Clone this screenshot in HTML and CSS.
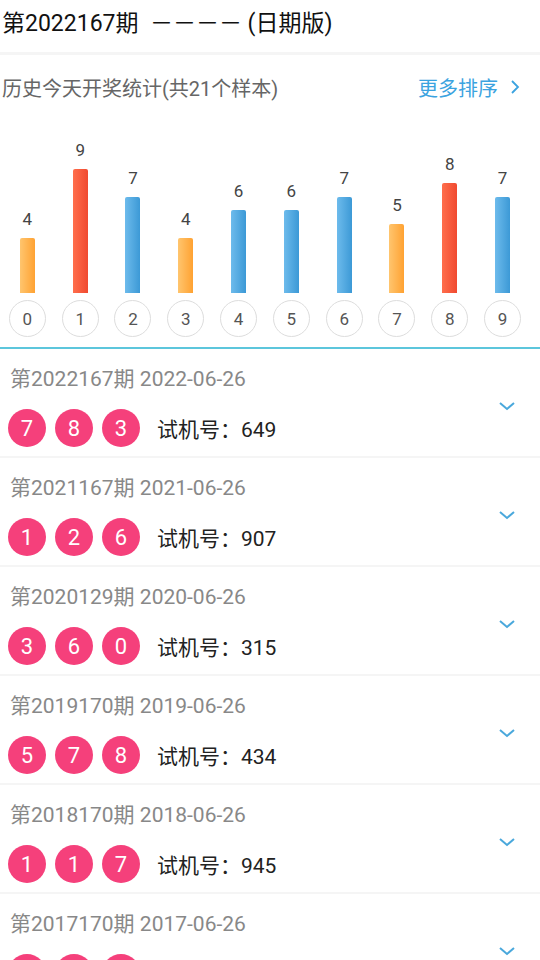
FILE: index.html
```html
<!DOCTYPE html>
<html lang="zh-CN">
<head>
	<meta charset="UTF-8">
	<title>开奖统计</title>
	<link rel="stylesheet" href="styles.css">
</head>
<body>
	<div class="page">
		<div class="top-title">第2022167期&nbsp; －－－－ (日期版)</div>
		<div class="divider"></div>

		<div class="stat-head">
			<span class="stat-title">历史今天开奖统计(共21个样本)</span>
			<a class="more-link">更多排序
				<svg width="10" height="16" viewBox="0 0 10 16"><polyline points="2,2 8,8 2,14" fill="none" stroke="#3ba3e0" stroke-width="1.8"/></svg>
			</a>
		</div>

		<div class="chart">
			<div class="col"><span class="num">4</span><div class="bar orange" style="height:55px"></div><span class="digit">0</span></div>
			<div class="col"><span class="num">9</span><div class="bar red" style="height:124px"></div><span class="digit">1</span></div>
			<div class="col"><span class="num">7</span><div class="bar blue" style="height:96px"></div><span class="digit">2</span></div>
			<div class="col"><span class="num">4</span><div class="bar orange" style="height:55px"></div><span class="digit">3</span></div>
			<div class="col"><span class="num">6</span><div class="bar blue" style="height:83px"></div><span class="digit">4</span></div>
			<div class="col"><span class="num">6</span><div class="bar blue" style="height:83px"></div><span class="digit">5</span></div>
			<div class="col"><span class="num">7</span><div class="bar blue" style="height:96px"></div><span class="digit">6</span></div>
			<div class="col"><span class="num">5</span><div class="bar orange" style="height:69px"></div><span class="digit">7</span></div>
			<div class="col"><span class="num">8</span><div class="bar red" style="height:110px"></div><span class="digit">8</span></div>
			<div class="col"><span class="num">7</span><div class="bar blue" style="height:96px"></div><span class="digit">9</span></div>
		</div>
		<div class="chart-line"></div>

		<ul class="draw-list">
			<li class="draw-item">
				<div class="draw-date">第2022167期 2022-06-26</div>
				<div class="draw-row">
					<span class="ball">7</span><span class="ball">8</span><span class="ball">3</span>
					<span class="test-no">试机号：649</span>
				</div>
				<svg class="arrow" width="18" height="10" viewBox="0 0 18 10"><polyline points="2,2 9,8 16,2" fill="none" stroke="#4aa8dc" stroke-width="2"/></svg>
			</li>
			<li class="draw-item">
				<div class="draw-date">第2021167期 2021-06-26</div>
				<div class="draw-row">
					<span class="ball">1</span><span class="ball">2</span><span class="ball">6</span>
					<span class="test-no">试机号：907</span>
				</div>
				<svg class="arrow" width="18" height="10" viewBox="0 0 18 10"><polyline points="2,2 9,8 16,2" fill="none" stroke="#4aa8dc" stroke-width="2"/></svg>
			</li>
			<li class="draw-item">
				<div class="draw-date">第2020129期 2020-06-26</div>
				<div class="draw-row">
					<span class="ball">3</span><span class="ball">6</span><span class="ball">0</span>
					<span class="test-no">试机号：315</span>
				</div>
				<svg class="arrow" width="18" height="10" viewBox="0 0 18 10"><polyline points="2,2 9,8 16,2" fill="none" stroke="#4aa8dc" stroke-width="2"/></svg>
			</li>
			<li class="draw-item">
				<div class="draw-date">第2019170期 2019-06-26</div>
				<div class="draw-row">
					<span class="ball">5</span><span class="ball">7</span><span class="ball">8</span>
					<span class="test-no">试机号：434</span>
				</div>
				<svg class="arrow" width="18" height="10" viewBox="0 0 18 10"><polyline points="2,2 9,8 16,2" fill="none" stroke="#4aa8dc" stroke-width="2"/></svg>
			</li>
			<li class="draw-item">
				<div class="draw-date">第2018170期 2018-06-26</div>
				<div class="draw-row">
					<span class="ball">1</span><span class="ball">1</span><span class="ball">7</span>
					<span class="test-no">试机号：945</span>
				</div>
				<svg class="arrow" width="18" height="10" viewBox="0 0 18 10"><polyline points="2,2 9,8 16,2" fill="none" stroke="#4aa8dc" stroke-width="2"/></svg>
			</li>
			<li class="draw-item">
				<div class="draw-date">第2017170期 2017-06-26</div>
				<div class="draw-row">
					<span class="ball">2</span><span class="ball">5</span><span class="ball">9</span>
					<span class="test-no">试机号：118</span>
				</div>
				<svg class="arrow" width="18" height="10" viewBox="0 0 18 10"><polyline points="2,2 9,8 16,2" fill="none" stroke="#4aa8dc" stroke-width="2"/></svg>
			</li>
		</ul>
	</div>
</body>
</html>
```

FILE: styles.css
```css
* {
	padding: 0;
	margin: 0;
	box-sizing: border-box;
}
html, body {
	width: 100%;
	height: 100%;
	background: #FFFFFF;
	overflow: hidden;
}
body {
	font-family: Roboto, "Noto Sans CJK SC", sans-serif;
	color: #222222;
}
.page {
	width: 540px;
}
.top-title {
	height: 52px;
	line-height: 48px;
	padding-left: 2px;
	font-size: 23px;
	color: #111111;
	white-space: nowrap;
}
.divider {
	height: 3px;
	background: #F5F5F5;
}
.stat-head {
	height: 64px;
	display: flex;
	align-items: center;
	justify-content: space-between;
	padding: 0 20px 0 2px;
}
.stat-title {
	font-size: 20px;
	color: #666666;
}
.more-link {
	display: flex;
	align-items: center;
	gap: 12px;
	font-size: 20px;
	color: #3BA3E0;
}
.chart {
	height: 228px;
	width: 528px;
	margin-left: 1px;
	display: grid;
	grid-template-columns: repeat(10, 1fr);
	align-items: end;
	padding-bottom: 10px;
}
.col {
	display: flex;
	flex-direction: column;
	align-items: center;
}
.num {
	font-size: 17px;
	line-height: 20px;
	color: #444444;
	margin-bottom: 9px;
}
.bar {
	width: 15px;
	border-radius: 2px 2px 0 0;
}
.bar.orange {
	background: linear-gradient(to right, #FFC56E, #FFA232);
}
.bar.red {
	background: linear-gradient(to right, #FF6E4C, #F04A30);
}
.bar.blue {
	background: linear-gradient(to right, #6DBBEC, #3C99D6);
}
.digit {
	width: 37px;
	height: 37px;
	margin-top: 7px;
	border: 1px solid #DDDDDD;
	border-radius: 50%;
	display: flex;
	align-items: center;
	justify-content: center;
	font-size: 17px;
	color: #555555;
}
.chart-line {
	height: 2px;
	background: #5CC6DC;
}
.draw-list {
	list-style: none;
}
.draw-item {
	position: relative;
	padding: 18px 0 9px 8px;
	border-bottom: 2px solid #F5F5F5;
}
.draw-date {
	padding-left: 2px;
	font-size: 21px;
	line-height: 24px;
	color: #888888;
}
.draw-row {
	margin-top: 18px;
	display: flex;
	align-items: center;
	gap: 9px;
}
.ball {
	width: 38px;
	height: 38px;
	border-radius: 50%;
	background: #F5407B;
	color: #FFFFFF;
	font-size: 22px;
	display: flex;
	align-items: center;
	justify-content: center;
}
.test-no {
	margin-left: 8px;
	font-size: 21px;
	color: #222222;
}
.arrow {
	position: absolute;
	right: 24px;
	top: 52px;
}
```
